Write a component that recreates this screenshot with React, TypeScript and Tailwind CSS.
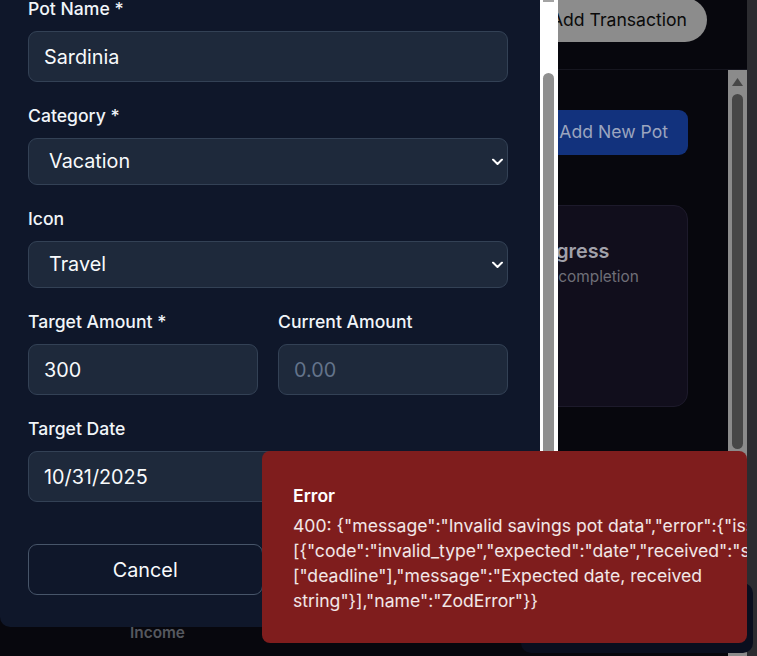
import React from "react";

const Label = ({ children }: { children: React.ReactNode }) => (
  <label className="mb-[9px] block text-[17.6px] font-medium leading-[26px] text-[#f1f5f9]">
    {children}
  </label>
);

const inputClass =
  "block h-[51px] w-full rounded-[9px] border border-[#334155] bg-[#1e293b] px-[15px] text-[19.8px] text-[#f8fafc] outline-none placeholder:text-[#64748b]";

const Chevron = () => (
  <svg
    width="11"
    height="7"
    viewBox="0 0 11 7"
    className="pointer-events-none absolute right-[5px] top-1/2 -translate-y-1/2"
  >
    <polyline
      points="1,1 5.5,5.5 10,1"
      fill="none"
      stroke="#ffffff"
      strokeWidth="2"
      strokeLinecap="round"
      strokeLinejoin="round"
    />
  </svg>
);

const SelectField = ({
  value,
  options,
}: {
  value: string;
  options: string[];
}) => (
  <div className="relative">
    <select
      defaultValue={value}
      className="block h-[47px] w-full appearance-none rounded-[9px] border border-[#334155] bg-[#1e293b] pl-[20px] pt-[1px] text-[19.8px] text-[#f8fafc] outline-none"
    >
      {options.map((o) => (
        <option key={o}>{o}</option>
      ))}
    </select>
    <Chevron />
  </div>
);

const PotForm = () => (
  <div className="absolute left-0 top-0 flex h-[627px] w-[558px] overflow-hidden rounded-bl-[10px] bg-[#0f172a]">
    <div className="flex w-[540px] flex-col pl-[28px] pr-[32px]">
      <div className="-mt-[4px]">
        <Label>Pot Name *</Label>
        <input className={inputClass} defaultValue="Sardinia" />
      </div>
      <div className="mt-[21px]">
        <Label>Category *</Label>
        <SelectField value="Vacation" options={["Emergency Fund", "Vacation", "Home", "Car", "Other"]} />
      </div>
      <div className="mt-[21px]">
        <Label>Icon</Label>
        <SelectField value="Travel" options={["Piggy Bank", "Travel", "Home", "Car", "Gift"]} />
      </div>
      <div className="mt-[21px] grid grid-cols-2 gap-[20px]">
        <div>
          <Label>Target Amount *</Label>
          <input className={inputClass} defaultValue="300" />
        </div>
        <div>
          <Label>Current Amount</Label>
          <input className={inputClass} placeholder="0.00" />
        </div>
      </div>
      <div className="mt-[21px]">
        <Label>Target Date</Label>
        <input className={inputClass} defaultValue="10/31/2025" />
      </div>
      <div className="mt-[42px] flex gap-[13px]">
        <button className="h-[51px] flex-1 rounded-[9px] border border-[#475569] pt-[3px] text-[19.8px] text-[#f8fafc]">
          Cancel
        </button>
        <div className="h-[51px] flex-1 rounded-[9px] bg-[#2563eb]" />
      </div>
    </div>
    <div className="w-[18px] bg-white">
      <div className="ml-[3px] h-[2px] w-[11px] bg-[#a3a3a3]" />
      <div className="ml-[3px] mt-[71px] h-[600px] w-[11px] rounded-full bg-[#8f8f8f]" />
    </div>
  </div>
);

const ErrorToast = () => (
  <div className="absolute left-[262px] top-[451px] h-[192px] w-[485px] overflow-hidden rounded-[8px] bg-[#7f1d1d] pl-[31px] pt-[33px]">
    <p className="text-[17.6px] font-semibold leading-[24px] text-white">Error</p>
    <p className="mt-[5px] whitespace-pre text-[17.6px] leading-[25px] text-white/90">
      {'400: {"message":"Invalid savings pot data","error":{"issues":\n[{"code":"invalid_type","expected":"date","received":"string","path":\n["deadline"],"message":"Expected date, received\nstring"}],"name":"ZodError"}}'}
    </p>
  </div>
);

export default function App() {
  return (
    <div className="relative h-[656px] w-[757px] overflow-hidden bg-[#07070d] font-['Inter',sans-serif]">
      <div className="flex h-full">
        <div className="flex flex-1 flex-col">
          <header className="flex h-[70px] shrink-0 items-start justify-end border-b border-[#16161f] pr-[40px]">
            <button className="-mt-[2px] h-[44px] rounded-full bg-[#8c8c8c] px-[20px] text-[17.6px] text-[#0a0a0a]">
              Add Transaction
            </button>
          </header>
          <div className="flex min-h-0 flex-1">
            <main className="flex flex-1 flex-col items-end pr-[40px] pt-[40px]">
              <button className="h-[45px] rounded-[9px] bg-[#12327d] px-[20px] text-[17.6px] text-[#9ba5bf]">
                + Add New Pot
              </button>
              <section className="mt-[50px] h-[202px] w-[275px] rounded-[14px] border border-[#1d1a2b] bg-[#110e1c] pl-[29px] pt-[31px]">
                <h3 className="text-[19.8px] font-semibold leading-[28px] text-[#a1a1aa]">
                  Savings Progress
                </h3>
                <p className="mt-[1px] text-[15.4px] leading-[21px] text-[#6f6f78]">
                  Overall savings completion
                </p>
              </section>
              <nav className="mt-auto h-[40px] self-stretch pl-[130px] pt-[4px]">
                <span className="text-[15.4px] font-semibold leading-[21px] text-[#55585f]">
                  Income
                </span>
              </nav>
            </main>
            <div className="flex w-[19px] flex-col items-center bg-[#8b8b8b] pt-[8px]">
              <svg width="11" height="8" viewBox="0 0 11 8">
                <polygon points="5.5,0 11,8 0,8" fill="#474747" />
              </svg>
              <div className="mt-[8px] h-[355px] w-[11px] rounded-full bg-[#474747]" />
            </div>
          </div>
        </div>
        <div className="w-[10px] bg-[#2c2c30]" />
      </div>
      <div className="absolute left-[521px] top-[583px] h-[70px] w-[232px] rounded-[10px] bg-[#0a0e1e]" />
      <PotForm />
      <ErrorToast />
    </div>
  );
}
